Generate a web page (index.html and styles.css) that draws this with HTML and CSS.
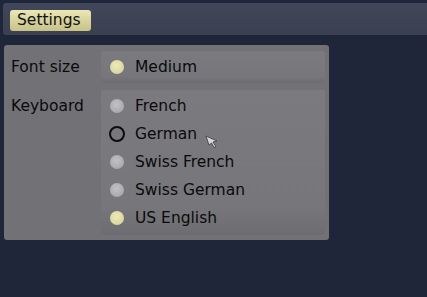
FILE: index.html
```html
<!DOCTYPE html>
<html>
<head>
<meta charset="utf-8">
<link rel="stylesheet" href="styles.css">
</head>
<body>
<div class="topbar">
  <div class="tab">Settings</div>
</div>
<div class="panel">
  <div class="label first">Font size</div>
  <div class="box box-first">
    <div class="opt"><span class="dot on"></span>Medium</div>
  </div>
  <div class="label">Keyboard</div>
  <div class="box box-kb">
    <div class="opt"><span class="dot"></span>French</div>
    <div class="opt"><span class="dot hover"></span>German</div>
    <div class="opt"><span class="dot"></span>Swiss French</div>
    <div class="opt"><span class="dot"></span>Swiss German</div>
    <div class="opt"><span class="dot on"></span>US English</div>
  </div>
  <svg class="cursor" width="14" height="14" viewBox="0 0 14 14">
    <path d="M1 1 L12 6 L8 7 L11 12 L9 12.5 L6.5 8 L4 10 Z" fill="#d8d8d8" stroke="#3a3a3a" stroke-width="0.8"/>
  </svg>
</div>
</body>
</html>
```
FILE: styles.css
```css
html, body {
  margin: 0;
  padding: 0;
}
body {
  background: #1f2639;
  width: 427px;
  height: 297px;
  overflow: hidden;
  font-family: "DejaVu Sans", sans-serif;
  font-size: 15.5px;
  color: #0a0a0a;
}
.topbar {
  margin: 3px 0 0 3px;
  height: 32px;
  background: linear-gradient(#41475a, #3a4050);
  border-radius: 3px 0 0 3px;
  box-sizing: border-box;
  padding: 7px 0 0 7px;
}
.tab {
  width: 81px;
  height: 21px;
  box-sizing: border-box;
  border-radius: 3px;
  background: linear-gradient(#ece8b6, #d6d29a 55%, #c6c28a);
  line-height: 21px;
  padding-left: 7px;
  color: #111;
}
.panel {
  position: relative;
  margin: 10px 0 0 4px;
  width: 325px;
  height: 195px;
  box-sizing: border-box;
  background: #727276;
  border-radius: 3px;
  padding: 6px 4px 0 0;
  display: grid;
  grid-template-columns: 97px 224px;
  grid-auto-rows: min-content;
  row-gap: 7px;
}
.label {
  padding: 2px 0 0 7px;
  line-height: 28px;
}
.label.first {
  padding-top: 2px;
}
.box {
  background: linear-gradient(#7b7b7f, #77777b 80%, #6d6d71);
  border-radius: 3px;
  padding: 2px 0 3px 9px;
}
.box-first {
  padding: 2px 0 2px 9px;
}
.opt {
  height: 28px;
  display: flex;
  align-items: center;
  gap: 11px;
  white-space: nowrap;
}
.dot {
  width: 14px;
  height: 14px;
  border-radius: 50%;
  box-sizing: border-box;
  background: radial-gradient(circle at 45% 40%, #c2c2c6, #a0a0a4);
  flex: none;
}
.dot.on {
  background: radial-gradient(circle at 45% 40%, #eeeab8, #d2ce92);
}
.dot.hover {
  width: 16px;
  height: 16px;
  margin: 0 -1px;
  border: 2px solid #0c0c0c;
  background: #78787c;
}
.cursor {
  position: absolute;
  left: 201px;
  top: 90px;
}
```
